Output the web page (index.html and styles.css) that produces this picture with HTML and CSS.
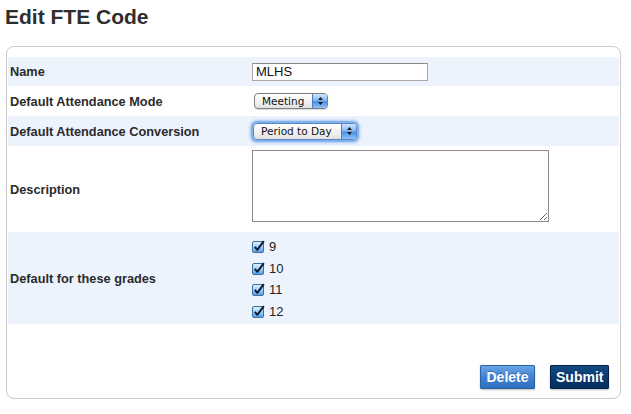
FILE: index.html
```html
<!DOCTYPE html>
<html>
<head>
<meta charset="utf-8">
<link rel="stylesheet" href="styles.css">
</head>
<body>
<h1 class="title">Edit FTE Code</h1>
<div class="panel">
  <div class="row row-short alt">
    <div class="label">Name</div>
    <div class="field"><input class="text-input" type="text" value="MLHS"></div>
  </div>
  <div class="row">
    <div class="label">Default Attendance Mode</div>
    <div class="field">
      <span class="select select-mode"><span class="select-text">Meeting</span><span class="arrows"><svg width="7" height="10" viewBox="0 0 7 10"><path d="M3.5 1 L6 4 L1 4 Z M1 6 L6 6 L3.5 9 Z" fill="#1a1a1a"/></svg></span></span>
    </div>
  </div>
  <div class="row alt">
    <div class="label">Default Attendance Conversion</div>
    <div class="field">
      <span class="select select-conv focused"><span class="select-text">Period to Day</span><span class="arrows"><svg width="7" height="10" viewBox="0 0 7 10"><path d="M3.5 1 L6 4 L1 4 Z M1 6 L6 6 L3.5 9 Z" fill="#1a1a1a"/></svg></span></span>
    </div>
  </div>
  <div class="row row-desc">
    <div class="label">Description</div>
    <div class="field field-desc"><textarea class="textarea"></textarea></div>
  </div>
  <div class="row row-grades alt">
    <div class="label">Default for these grades</div>
    <div class="field grades">
      <div class="grade"><svg class="cb" width="13" height="13" viewBox="0 0 13 13"><defs><linearGradient id="g" x1="0" y1="0" x2="0" y2="1"><stop offset="0" stop-color="#e4f2fd"/><stop offset="0.5" stop-color="#9fd0f6"/><stop offset="1" stop-color="#4f9be3"/></linearGradient></defs><rect x="0.5" y="1.5" width="11" height="11" rx="1.5" fill="url(#g)" stroke="#3d6f9f"/><path d="M2.8 6.8 L5.3 9.8 L11.8 1.2" fill="none" stroke="#0b1c3a" stroke-width="2" stroke-linejoin="round"/></svg><span>9</span></div>
      <div class="grade"><svg class="cb" width="13" height="13" viewBox="0 0 13 13"><rect x="0.5" y="1.5" width="11" height="11" rx="1.5" fill="url(#g)" stroke="#3d6f9f"/><path d="M2.8 6.8 L5.3 9.8 L11.8 1.2" fill="none" stroke="#0b1c3a" stroke-width="2" stroke-linejoin="round"/></svg><span>10</span></div>
      <div class="grade"><svg class="cb" width="13" height="13" viewBox="0 0 13 13"><rect x="0.5" y="1.5" width="11" height="11" rx="1.5" fill="url(#g)" stroke="#3d6f9f"/><path d="M2.8 6.8 L5.3 9.8 L11.8 1.2" fill="none" stroke="#0b1c3a" stroke-width="2" stroke-linejoin="round"/></svg><span>11</span></div>
      <div class="grade"><svg class="cb" width="13" height="13" viewBox="0 0 13 13"><rect x="0.5" y="1.5" width="11" height="11" rx="1.5" fill="url(#g)" stroke="#3d6f9f"/><path d="M2.8 6.8 L5.3 9.8 L11.8 1.2" fill="none" stroke="#0b1c3a" stroke-width="2" stroke-linejoin="round"/></svg><span>12</span></div>
    </div>
  </div>
  <div class="footer">
    <button class="btn btn-delete" type="button">Delete</button>
    <button class="btn btn-submit" type="button">Submit</button>
  </div>
</div>
</body>
</html>
```

FILE: styles.css
```css
html, body {
  margin: 0;
  padding: 0;
  background: #ffffff;
}
body {
  padding: 0 6px;
  font-family: "Liberation Sans", Arial, sans-serif;
  color: #333333;
}
.title {
  margin: 5px 0 17px -1px;
  font-size: 21px;
  line-height: 24px;
  font-weight: bold;
  color: #2e2e2e;
}
.panel {
  box-sizing: border-box;
  width: 615px;
  border: 1px solid #c9c9c9;
  border-radius: 8px;
  padding: 10px 1px 0;
}
.row {
  display: grid;
  grid-template-columns: 244px 1fr;
  align-items: center;
  height: 30px;
}
.row-short {
  height: 29px;
}
.alt {
  background: #edf3fd;
}
.label {
  padding-left: 2px;
  font-size: 12.75px;
  font-weight: bold;
  color: #2b2b2b;
}
.field {
  display: flex;
  align-items: center;
}
.text-input {
  box-sizing: border-box;
  width: 176px;
  height: 18px;
  margin: 0;
  padding: 0 3px;
  border: 1px solid #a8a8a8;
  border-top-color: #8a8a8a;
  font-family: "Liberation Sans", Arial, sans-serif;
  font-size: 13px;
  color: #111111;
  background: #ffffff;
  outline: none;
}
.select {
  box-sizing: border-box;
  display: inline-flex;
  align-items: stretch;
  height: 16px;
  border: 1px solid #7f7f7f;
  border-radius: 4px;
  background: linear-gradient(#ffffff, #f3f3f3 50%, #e2e2e2);
  overflow: hidden;
  font-family: "DejaVu Sans", sans-serif;
  font-size: 10.5px;
  color: #111111;
  box-shadow: 0 1px 1px rgba(0,0,0,0.15);
}
.select-mode {
  width: 74px;
  margin-left: 2px;
}
.select-conv {
  width: 104px;
  height: 17px;
  margin-left: 1px;
}
.focused {
  box-shadow: 0 0 1px 2px #7fb1ea, 0 0 3px 3px rgba(96,152,226,0.45);
  border-color: #5a86c4;
}
.select-text {
  flex: 1;
  display: flex;
  align-items: center;
  padding-left: 7px;
  line-height: 1;
}
.arrows {
  width: 14px;
  display: flex;
  align-items: center;
  justify-content: center;
  border-left: 1px solid #4d7fc4;
  background: linear-gradient(#cfe4fb, #86b9f1 45%, #4a8fe6 55%, #8fc3f7);
}
.row-desc {
  height: 86px;
}
.field-desc {
  align-self: start;
  padding-top: 4px;
}
.textarea {
  box-sizing: border-box;
  width: 297px;
  height: 72px;
  margin: 0;
  border: 1px solid #8b8b8b;
  resize: both;
  font-family: "Liberation Sans", Arial, sans-serif;
  font-size: 13px;
  background: #ffffff;
  outline: none;
}
.row-grades {
  height: 92px;
}
.grades {
  flex-direction: column;
  align-items: flex-start;
  align-self: start;
  padding-top: 4px;
}
.grade {
  display: flex;
  align-items: center;
  height: 21.5px;
  font-size: 13px;
  color: #222222;
}
.cb {
  margin-right: 4px;
}
.footer {
  display: flex;
  justify-content: flex-end;
  gap: 15px;
  padding: 41px 10px 9px 0;
}
.btn {
  box-sizing: border-box;
  height: 24px;
  margin: 0;
  padding: 0 5px;
  font-family: "Liberation Sans", Arial, sans-serif;
  font-size: 14px;
  font-weight: bold;
  color: #ffffff;
  border-radius: 1px;
  cursor: pointer;
  box-shadow: 0 1px 2px rgba(0,0,0,0.25);
}
.btn-delete {
  width: 55px;
  border: 1px solid #2c62a3;
  background: linear-gradient(#6aa7e6, #3f82d2 50%, #2f6fc0);
  text-shadow: 0 -1px 0 rgba(0,0,0,0.25);
}
.btn-submit {
  width: 59px;
  border: 1px solid #04234a;
  background: linear-gradient(#124a83, #0a3a6d 50%, #07305d);
}
```
